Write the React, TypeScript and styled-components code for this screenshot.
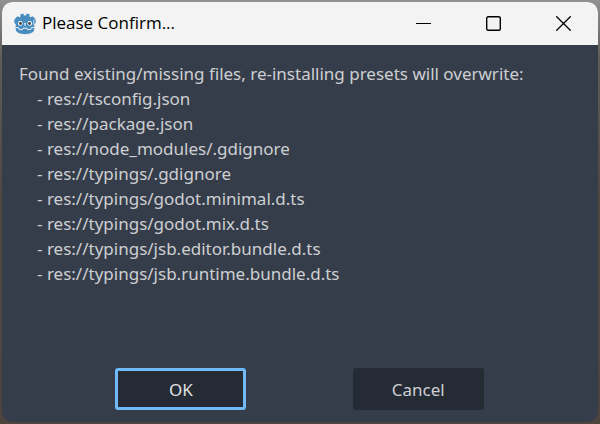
import React from "react";
import styled, { createGlobalStyle } from "styled-components";

const GlobalStyle = createGlobalStyle`
  * { box-sizing: border-box; }
  body { margin: 0; font-family: "Noto Sans", "Open Sans", sans-serif; }
`;

const Desktop = styled.div`
  display: flex;
  min-height: 100vh;
  padding: 2px;
  background: linear-gradient(#919191 0, #8a8a8a 8px, #5e5b58 60px, #50483f 200px, #4d443d 100%);
`;

const Dialog = styled.section`
  display: flex;
  flex: 1;
  flex-direction: column;
  overflow: hidden;
  border-radius: 10px;
  background: #363d4a;
`;

const TitleBar = styled.header`
  display: flex;
  align-items: center;
  height: 43px;
  padding-left: 12px;
  background: #f3f3f3;
  color: #000;
`;

const Title = styled.h1`
  flex: 1;
  margin: 0 0 0 6px;
  padding-bottom: 2px;
  font-family: "Open Sans", "Noto Sans", sans-serif;
  font-size: 17px;
  font-weight: 400;
  line-height: 24px;
`;

const WindowButton = styled.button`
  display: flex;
  align-items: center;
  justify-content: center;
  width: 70px;
  height: 43px;
  padding: 0;
  border: 0;
  background: transparent;
  color: #000;
`;

const Message = styled.div`
  flex: 1;
  padding: 16px 17px;
  color: #cdcfd2;
  font-size: 17px;
  line-height: 25px;
`;

const Lead = styled.p`
  margin: 0;
`;

const FileList = styled.ul`
  margin: 0;
  padding: 0 0 0 18px;
  list-style: none;
`;

const FileItem = styled.li`
  &::before { content: "- "; }
`;

const Footer = styled.footer`
  display: flex;
  justify-content: space-evenly;
  padding: 0 8px 12px 7px;
`;

const ActionButton = styled.button<{ $focused?: boolean }>`
  width: 131px;
  height: 42px;
  padding: 2px 0 0;
  border: 3px solid ${(p) => (p.$focused ? "#70bafa" : "#252b34")};
  border-radius: 3px;
  background: #252b34;
  color: ${(p) => (p.$focused ? "#e0e1e3" : "#cdcfd2")};
  font-family: inherit;
  font-size: 17px;
  line-height: 24px;
`;

const files = [
  "res://tsconfig.json",
  "res://package.json",
  "res://node_modules/.gdignore",
  "res://typings/.gdignore",
  "res://typings/godot.minimal.d.ts",
  "res://typings/godot.mix.d.ts",
  "res://typings/jsb.editor.bundle.d.ts",
  "res://typings/jsb.runtime.bundle.d.ts",
];

const GodotIcon = () => (
  <svg width="22" height="22" viewBox="0 0 22 22" aria-hidden="true">
    <path
      fill="#478cbf"
      d="M6.500 1.200 9.200.4l.8 2.200h2l.8-2.200 2.700.8.1 2.500 1 .5 1.900-.9 2.500 2.200-.7 1.600V16c0 3.400-4.300 5.200-9.300 5.200S1.700 19.400 1.700 16V7.100L1 5.500l2.500-2.200 1.900.9 1-.5zM.3 6.300l2.200.7v5L.3 9.800zm21.400 0-2.200.7v5l2.200-2.200z"
    />
    <path
      fill="none"
      stroke="#fff"
      strokeWidth=".9"
      d="M1.800 14.500l3 .3.500 1.700 3.200.2.500-1.500h4l.5 1.500 3.200-.2.500-1.700 3-.3"
    />
    <circle cx="6.300" cy="10.400" r="2.300" fill="#fff" />
    <circle cx="15.700" cy="10.400" r="2.300" fill="#fff" />
    <circle cx="6.500" cy="10.500" r="1.400" fill="#414042" />
    <circle cx="15.500" cy="10.500" r="1.400" fill="#414042" />
    <path stroke="#fff" strokeWidth="1.100" strokeLinecap="round" d="M11 10.300v2" />
  </svg>
);

const MinimizeIcon = () => (
  <svg width="15" height="15" viewBox="0 0 15 15" aria-hidden="true">
    <path stroke="currentColor" d="M0 7.500h15" />
  </svg>
);

const MaximizeIcon = () => (
  <svg width="15" height="15" viewBox="0 0 15 15" aria-hidden="true">
    <rect x=".7" y=".7" width="13.600" height="13.600" rx="1.500" fill="none" stroke="currentColor" strokeWidth="1.400" />
  </svg>
);

const CloseIcon = () => (
  <svg width="15" height="15" viewBox="0 0 15 15" aria-hidden="true">
    <path stroke="currentColor" strokeWidth="1.300" d="M.3.3l14.400 14.400M14.700.3.3 14.700" />
  </svg>
);

export default function App() {
  return (
    <>
      <GlobalStyle />
      <Desktop>
        <Dialog role="dialog" aria-labelledby="dialog-title">
          <TitleBar>
            <GodotIcon />
            <Title id="dialog-title">Please Confirm...</Title>
            <WindowButton type="button" aria-label="Minimize"><MinimizeIcon /></WindowButton>
            <WindowButton type="button" aria-label="Maximize"><MaximizeIcon /></WindowButton>
            <WindowButton type="button" aria-label="Close"><CloseIcon /></WindowButton>
          </TitleBar>
          <Message>
            <Lead>Found existing/missing files, re-installing presets will overwrite:</Lead>
            <FileList>
              {files.map((file) => <FileItem key={file}>{file}</FileItem>)}
            </FileList>
          </Message>
          <Footer>
            <ActionButton type="button" $focused>OK</ActionButton>
            <ActionButton type="button">Cancel</ActionButton>
          </Footer>
        </Dialog>
      </Desktop>
    </>
  );
}
